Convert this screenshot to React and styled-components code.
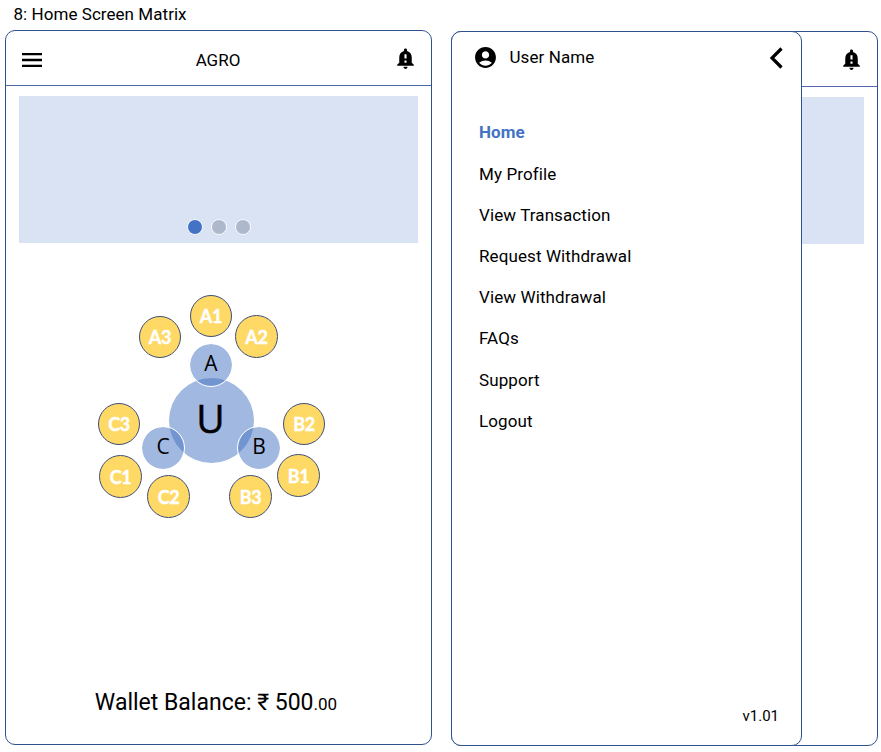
import React from "react";
import styled, { createGlobalStyle } from "styled-components";
import { MdNotificationImportant, MdAccountCircle } from "react-icons/md";

const GlobalStyle = createGlobalStyle`
  * { box-sizing: border-box; }
  body {
    margin: 0;
    background: #fff;
    color: #000;
    font-family: Roboto, "Liberation Sans", sans-serif;
    overflow: hidden;
  }
  svg { display: block; }
`;

const Page = styled.main`
  width: 881px;
  height: 752px;
  overflow: hidden;
`;

const Title = styled.h1`
  margin: 0;
  height: 30px;
  padding: 4px 0 0 13.5px;
  font-size: 17px;
  line-height: 20px;
  font-weight: 400;
  letter-spacing: 0.05px;
`;

const Screens = styled.div`
  display: flex;
  align-items: flex-start;
  gap: 19px;
  padding-left: 5px;
`;

const Phone = styled.section`
  position: relative;
  display: flex;
  flex-direction: column;
  flex: none;
  width: 427px;
  height: 715px;
  margin-top: ${(p) => p.$top || 0}px;
  border: 1px solid #2f528f;
  border-radius: 10px;
  background: #fff;
`;

const AppBar = styled.header`
  display: flex;
  align-items: center;
  justify-content: space-between;
  height: 55px;
  padding: 3px 13px 0 16px;
  border-bottom: 1px solid ${(p) => p.$line || "#4a6ba5"};
`;

const Brand = styled.span`
  padding-left: 1px;
  font-size: 17px;
  line-height: 20px;
`;

const BellSlot = styled.span`
  display: flex;
  margin-top: -3px;
`;

const Banner = styled.div`
  display: flex;
  flex: none;
  align-items: flex-end;
  justify-content: center;
  gap: 8px;
  height: 147px;
  margin: 10px 13px 0;
  padding: 0 0 8px 1px;
  background: #dae3f3;
`;

const Dot = styled.span`
  width: 16px;
  height: 16px;
  border: 1px solid #f6f8fc;
  border-radius: 50%;
  background: ${(p) => (p.$active ? "#4472c4" : "#adb9ca")};
`;

const Matrix = styled.div`
  position: relative;
  flex: none;
  width: 228px;
  height: 224px;
  margin: 50px 0 0 91px;
`;

const Node = styled.div`
  position: absolute;
  left: ${(p) => p.$x - p.$size / 2}px;
  top: ${(p) => p.$y - p.$size / 2}px;
  display: flex;
  align-items: center;
  justify-content: center;
  width: ${(p) => p.$size}px;
  height: ${(p) => p.$size}px;
  border-radius: 50%;
  font-family: "Open Sans", "Noto Sans", sans-serif;
  line-height: 1;
`;

const CoreNode = styled(Node)`
  background: #a1b8e1;
  font-size: 39px;
  padding: 0 2px 7px 0;
  -webkit-text-stroke: 0.5px #000;
`;

const BranchNode = styled(Node)`
  border: 1.5px solid #fff;
  background: rgba(68, 114, 196, 0.5);
  background-clip: padding-box;
  font-size: 21px;
  padding-bottom: 4px;
`;

const LeafNode = styled(Node)`
  border: 1px solid #3e4f78;
  background: #ffd966;
  color: #fff;
  font-family: Lato, "Open Sans", sans-serif;
  font-size: 18px;
  font-weight: 700;
  letter-spacing: -0.3px;
  -webkit-text-stroke: 0.4px #fff;
`;

const Balance = styled.p`
  margin: auto 0 25px;
  padding-right: 5px;
  text-align: center;
  font-size: 23px;
  line-height: 30px;
  white-space: nowrap;
`;

const Cents = styled.span`
  font-size: 17px;
`;

const Drawer = styled.aside`
  position: absolute;
  left: -1px;
  top: -1px;
  display: flex;
  flex-direction: column;
  width: 351px;
  height: 715px;
  border: 1px solid #2f528f;
  border-radius: 10px;
  background: #fff;
`;

const UserRow = styled.div`
  display: flex;
  align-items: center;
  height: 51px;
  padding: 0 18px 0 21px;
`;

const UserName = styled.span`
  flex: 1;
  margin-left: 11.5px;
  padding-bottom: 2px;
  font-size: 17px;
  letter-spacing: 0.1px;
`;

const Menu = styled.nav`
  display: flex;
  flex-direction: column;
  margin-top: 29.4px;
  padding-left: 27px;
`;

const MenuItem = styled.a`
  height: 41.2px;
  font-size: 17px;
  line-height: 41.2px;
  letter-spacing: 0.1px;
  font-weight: ${(p) => (p.$active ? 700 : 400)};
  color: ${(p) => (p.$active ? "#4472c4" : "#000")};
`;

const Version = styled.span`
  margin: auto 22px 18px auto;
  font-size: 15px;
  line-height: 22px;
`;

const leaves = [
  ["A1", 114, 23, 42], ["A3", 63, 44, 42], ["A2", 159.5, 43.5, 43],
  ["C3", 22, 131, 42], ["B2", 207, 131, 42], ["C1", 23.5, 183.5, 43],
  ["B1", 201.5, 182.5, 43], ["C2", 71.5, 203.5, 43], ["B3", 153.5, 203.5, 43],
];

const branches = [["A", 114, 72], ["C", 66, 155], ["B", 162, 155]];

const menu = [
  "Home", "My Profile", "View Transaction", "Request Withdrawal",
  "View Withdrawal", "FAQs", "Support", "Logout",
];

const Hamburger = () => (
  <svg width="20" height="14" viewBox="0 0 20 14">
    <path d="M0 1h20M0 7h20M0 13h20" stroke="#000" strokeWidth="2.3" />
  </svg>
);

const BackChevron = () => (
  <svg width="13" height="22" viewBox="0 0 13 22">
    <path d="M11.5 1.5L2 11l9.5 9.5" fill="none" stroke="#000" strokeWidth="3.2" />
  </svg>
);

const Bell = () => (
  <BellSlot><MdNotificationImportant size={25} /></BellSlot>
);

export default function App() {
  return (
    <Page>
      <GlobalStyle />
      <Title>8: Home Screen Matrix</Title>
      <Screens>
        <Phone>
          <AppBar>
            <Hamburger />
            <Brand>AGRO</Brand>
            <Bell />
          </AppBar>
          <Banner>
            <Dot $active />
            <Dot />
            <Dot />
          </Banner>
          <Matrix>
            <CoreNode $x={114.5} $y={127.5} $size={85}>U</CoreNode>
            {branches.map(([name, x, y]) => (
              <BranchNode key={name} $x={x} $y={y} $size={44}>{name}</BranchNode>
            ))}
            {leaves.map(([name, x, y, size]) => (
              <LeafNode key={name} $x={x} $y={y} $size={size}>{name}</LeafNode>
            ))}
          </Matrix>
          <Balance>Wallet Balance: ₹ 500<Cents>.00</Cents></Balance>
        </Phone>
        <Phone $top={1}>
          <AppBar $line="#5468b4">
            <span />
            <Bell />
          </AppBar>
          <Banner />
          <Drawer>
            <UserRow>
              <MdAccountCircle size={25} />
              <UserName>User Name</UserName>
              <BackChevron />
            </UserRow>
            <Menu>
              {menu.map((item) => (
                <MenuItem key={item} $active={item === "Home"}>{item}</MenuItem>
              ))}
            </Menu>
            <Version>v1.01</Version>
          </Drawer>
        </Phone>
      </Screens>
    </Page>
  );
}
